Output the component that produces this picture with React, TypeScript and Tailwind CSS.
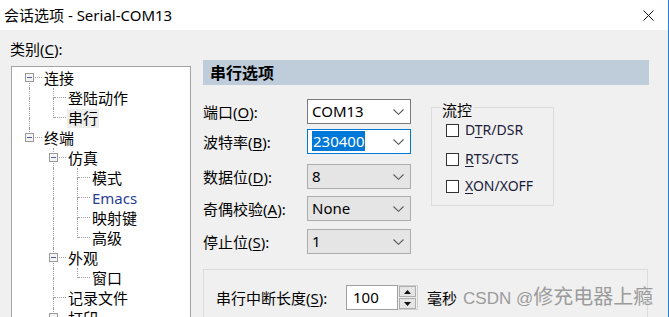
import type { ReactNode } from "react";

type Guide = "blank" | "pipe" | "tee" | "ell" | "root";

type TreeRow = {
  label: string;
  guides: Guide[];
  box?: boolean;
  selected?: boolean;
  hot?: boolean;
};

const rows: TreeRow[] = [
  { label: "连接", guides: ["root"], box: true },
  { label: "登陆动作", guides: ["pipe", "tee"] },
  { label: "串行", guides: ["pipe", "ell"], selected: true },
  { label: "终端", guides: ["ell"], box: true },
  { label: "仿真", guides: ["blank", "tee"], box: true },
  { label: "模式", guides: ["blank", "pipe", "tee"] },
  { label: "Emacs", guides: ["blank", "pipe", "tee"], hot: true },
  { label: "映射键", guides: ["blank", "pipe", "tee"] },
  { label: "高级", guides: ["blank", "pipe", "ell"] },
  { label: "外观", guides: ["blank", "tee"], box: true },
  { label: "窗口", guides: ["blank", "pipe", "ell"] },
  { label: "记录文件", guides: ["blank", "tee"] },
  { label: "打印", guides: ["blank", "tee"], box: true },
];

const dot = "border-dotted border-[#a0a0a0]";

function GuideCell({ kind, last, box }: { kind: Guide; last: boolean; box?: boolean }) {
  const up = kind === "pipe" || kind === "tee" || kind === "ell";
  const down = kind === "pipe" || kind === "tee" || kind === "root";
  const right = last && kind !== "pipe" && kind !== "blank";
  return (
    <div className="relative grid h-full w-[24px] shrink-0 grid-cols-[12px_12px] grid-rows-[10px_10px]">
      <div className={up ? `border-r ${dot}` : ""} />
      <div className={right ? `border-b ${dot}` : ""} />
      <div className={down ? `border-r ${dot}` : ""} />
      <div />
      {box && (
        <span className="absolute left-[7px] top-[5px] flex h-[9px] w-[9px] items-center justify-center border border-[#9a9a9a] bg-[#f4f4f4]">
          <span className="h-px w-[5px] bg-[#4c5f9e]" />
        </span>
      )}
    </div>
  );
}

function Tree() {
  return (
    <div className="ml-px mt-[7px] h-[300px] w-[180px] border border-[#a3a3a3] bg-white pl-[6px] pt-px">
      {rows.map((r) => (
        <div key={r.label} className="flex h-[20px] items-center">
          {r.guides.map((g, i) => (
            <GuideCell key={i} kind={g} last={i === r.guides.length - 1} box={r.box && i === r.guides.length - 1} />
          ))}
          <span
            className={`ml-px whitespace-nowrap px-[1px] text-[15px] leading-[19px] ${r.selected ? "bg-[#ededed]" : ""} ${
              r.hot ? "text-[#2a3f94]" : "text-black"
            }`}
          >
            {r.label}
          </span>
        </div>
      ))}
    </div>
  );
}

function Chevron() {
  return (
    <svg viewBox="0 0 11 6" className="h-[6px] w-[11px]" fill="none" stroke="#5a5a5a" strokeWidth={1.1}>
      <path d="M0.5 0.5 L5.5 5.3 L10.5 0.5" />
    </svg>
  );
}

function Combo({ value, variant }: { value: ReactNode; variant: "white" | "focus" | "gray" }) {
  const cls =
    variant === "white"
      ? "border-[#7a7a7a] bg-white"
      : variant === "focus"
        ? "border-[#0078d7] bg-white"
        : "border-[#adadad] bg-[#e5e5e5]";
  return (
    <div className={`flex h-[25px] w-[104px] shrink-0 items-center justify-between border pl-[4px] pr-[6px] ${cls}`}>
      <span className="text-[15px] leading-[19px] text-black">{value}</span>
      <Chevron />
    </div>
  );
}

function Field({ label, hot, rest, children, mt }: { label: string; hot: string; rest: string; children: ReactNode; mt: string }) {
  return (
    <div className={`flex items-center ${mt}`}>
      <span className="w-[104px] shrink-0 whitespace-nowrap text-[15px] leading-[20px] text-black">
        {label}(<u className="underline-offset-2">{hot}</u>){rest}
      </span>
      {children}
    </div>
  );
}

function Check({ children, mt }: { children: ReactNode; mt: string }) {
  return (
    <div className={`flex h-[20px] items-center ${mt}`}>
      <span className="h-[13px] w-[13px] shrink-0 border border-[#333333] bg-white" />
      <span className="ml-[6px] whitespace-nowrap text-[14px] leading-[20px] text-[#1b1b3a]">{children}</span>
    </div>
  );
}

function Spinner() {
  return (
    <div className="flex h-[25px] shrink-0">
      <div className="flex w-[52px] items-center border border-[#a0a0a0] bg-white pl-[6px]">
        <span className="text-[15px] leading-[19px] text-black">100</span>
      </div>
      <div className="flex w-[20px] flex-col justify-center gap-[1px] border-y border-r border-[#cfcfcf] bg-[#f0f0f0] px-[1px]">
        <span className="flex h-[11px] items-center justify-center border border-[#adadad] bg-[#e5e5e5]">
          <svg viewBox="0 0 7 4" className="h-[4px] w-[7px]">
            <path d="M0 4 L3.5 0 L7 4 Z" fill="#111" />
          </svg>
        </span>
        <span className="flex h-[11px] items-center justify-center border border-[#adadad] bg-[#e5e5e5]">
          <svg viewBox="0 0 7 4" className="h-[4px] w-[7px]">
            <path d="M0 0 L3.5 4 L7 0 Z" fill="#111" />
          </svg>
        </span>
      </div>
    </div>
  );
}

export default function App() {
  return (
    <div
      className="flex h-[317px] w-[669px] flex-col overflow-hidden border-r border-[#1883d7]"
      style={{ fontFamily: '"Noto Sans", "Noto Sans CJK SC", sans-serif' }}
    >
      <div className="flex h-[30px] shrink-0 items-center justify-between bg-white pl-[4px] pr-[14px]">
        <span className="text-[15px] leading-[20px] text-black">会话选项 - Serial-COM13</span>
        <svg viewBox="0 0 11 11" className="h-[11px] w-[11px]" stroke="#111" strokeWidth={1}>
          <path d="M0.5 0.5 L10.5 10.5 M10.5 0.5 L0.5 10.5" />
        </svg>
      </div>

      <div className="flex flex-1 bg-[#f0f0f0]">
        <div className="flex w-[191px] shrink-0 flex-col pl-[10px] pt-[9px]">
          <span className="text-[15px] leading-[20px] text-black">
            类别(<u className="underline-offset-2">C</u>):
          </span>
          <Tree />
        </div>

        <div className="ml-[12px] flex flex-col pt-[30px]">
          <div className="flex h-[25px] w-[446px] items-center bg-[#bfcddb] pl-[7px]">
            <span className="text-[16px] font-bold leading-[20px] text-black">串行选项</span>
          </div>

          <div className="mt-[14px] flex">
            <div className="flex flex-col">
              <Field label="端口" hot="O" rest=":" mt="">
                <Combo value="COM13" variant="white" />
              </Field>
              <Field label="波特率" hot="B" rest=":" mt="mt-[5px]">
                <Combo value={<span className="bg-[#0078d7] px-px text-white">230400</span>} variant="focus" />
              </Field>
              <Field label="数据位" hot="D" rest=":" mt="mt-[10px]">
                <Combo value="8" variant="gray" />
              </Field>
              <Field label="奇偶校验" hot="A" rest=":" mt="mt-[7px]">
                <Combo value="None" variant="gray" />
              </Field>
              <Field label="停止位" hot="S" rest=":" mt="mt-[8px]">
                <Combo value="1" variant="gray" />
              </Field>
            </div>

            <fieldset className="ml-[20px] mt-[-5px] h-[112px] w-[123px] self-start border border-[#dcdcdc] pb-[9px] pl-[14px]">
              <legend className="ml-[-5px] px-px pt-[6px] text-[15px] leading-[20px] text-black">流控</legend>
              <Check mt="">
                D<u className="underline-offset-2">T</u>R/DSR
              </Check>
              <Check mt="mt-[9px]">
                <u className="underline-offset-2">R</u>TS/CTS
              </Check>
              <Check mt="mt-[7px]">
                <u className="underline-offset-2">X</u>ON/XOFF
              </Check>
            </fieldset>
          </div>

          <div className="mt-[15px] h-[60px] w-[445px] border border-[#dcdcdc] pl-[12px] pt-[14px]">
            <div className="flex items-center whitespace-nowrap">
              <span className="w-[130px] shrink-0 text-[15px] leading-[20px] text-black">
                串行中断长度(<u className="underline-offset-2">S</u>):
              </span>
              <Spinner />
              <span className="ml-[9px] shrink-0 text-[15px] leading-[20px] text-black">毫秒</span>
              <span className="ml-[6px] shrink-0 text-[#9b9b9b]">
                <span className="text-[17px]" style={{ fontFamily: '"Liberation Sans", sans-serif' }}>
                  CSDN @
                </span>
                <span className="text-[20px] leading-[24px]" style={{ fontFamily: '"Noto Sans CJK SC", sans-serif' }}>
                  修充电器上瘾
                </span>
              </span>
            </div>
          </div>
        </div>
      </div>
    </div>
  );
}
